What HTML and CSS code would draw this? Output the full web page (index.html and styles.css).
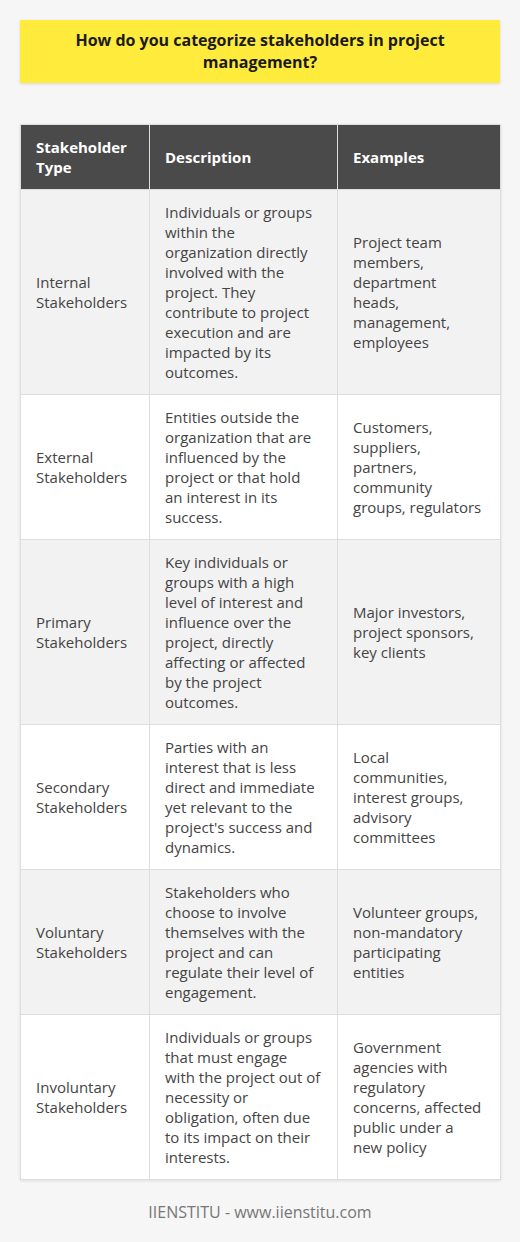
FILE: index.html
```html
<!DOCTYPE html>
<html>
<head>
<meta charset="utf-8">
<link rel="stylesheet" href="styles.css">
</head>
<body>
<div class="page">
  <h1 class="title">How do you categorize stakeholders in project management?</h1>
  <table class="grid">
    <colgroup>
      <col class="c1"><col class="c2"><col class="c3">
    </colgroup>
    <thead>
      <tr><th>Stakeholder Type</th><th>Description</th><th>Examples</th></tr>
    </thead>
    <tbody>
      <tr><td>Internal Stakeholders</td><td>Individuals or groups within the organization directly involved with the project. They contribute to project execution and are impacted by its outcomes.</td><td>Project team members, department heads, management, employees</td></tr>
      <tr><td>External Stakeholders</td><td>Entities outside the organization that are influenced by the project or that hold<br>an interest in its success.</td><td>Customers, suppliers, partners, community groups, regulators</td></tr>
      <tr><td>Primary Stakeholders</td><td>Key individuals or groups with a high level of interest and influence over the project, directly affecting or affected by the project outcomes.</td><td>Major investors, project sponsors, key clients</td></tr>
      <tr><td>Secondary Stakeholders</td><td>Parties with an interest that is less direct and immediate yet relevant to the project's success and dynamics.</td><td>Local communities, interest groups, advisory committees</td></tr>
      <tr><td>Voluntary Stakeholders</td><td>Stakeholders who choose to involve themselves with the project and can regulate their level of engagement.</td><td>Volunteer groups, non-mandatory participating entities</td></tr>
      <tr><td>Involuntary Stakeholders</td><td>Individuals or groups that must engage<br><span class="nowrap">with the project out of</span> necessity or obligation, often due to its impact on their interests.</td><td>Government agencies with regulatory concerns, affected public under a new policy</td></tr>
    </tbody>
  </table>
  <p class="footer">IIENSTITU - www.iienstitu.com</p>
</div>
</body>
</html>
```
FILE: styles.css
```css
html, body {
  margin: 0;
  padding: 0;
  background: #f6f6f6;
}
body {
  font-family: "Open Sans", "DejaVu Sans", sans-serif;
}
.page {
  padding: 20px 20px 0 20px;
}
.title {
  margin: 0;
  background: #ffeb3b;
  color: #1a1a1a;
  font-size: 16px;
  font-weight: 700;
  line-height: 22px;
  text-align: center;
  padding: 9px 40px 10px;
  box-shadow: 0 1px 3px rgba(0,0,0,0.12);
}
.grid {
  margin-top: 41px;
  width: 480px;
  border-collapse: collapse;
  table-layout: fixed;
  box-shadow: 0 1px 3px rgba(0,0,0,0.1);
}
.c1 { width: 129px; }
.c2 { width: 188px; }
.c3 { width: 163px; }
.grid th, .grid td {
  border: 1px solid #dddddd;
  padding: 12px 15px;
  font-size: 15px;
  line-height: 20px;
  text-align: left;
  vertical-align: middle;
}
.nowrap {
  white-space: nowrap;
}
.grid th {
  background: #4a4a4a;
  color: #ffffff;
  font-weight: 700;
}
.grid td {
  color: #444444;
}
.grid tbody tr:nth-child(odd) td {
  background: #f2f2f2;
}
.grid tbody tr:nth-child(even) td {
  background: #ffffff;
}
.footer {
  margin: 21px 0 0;
  text-align: center;
  font-size: 16px;
  line-height: 22px;
  color: #777777;
}
```
